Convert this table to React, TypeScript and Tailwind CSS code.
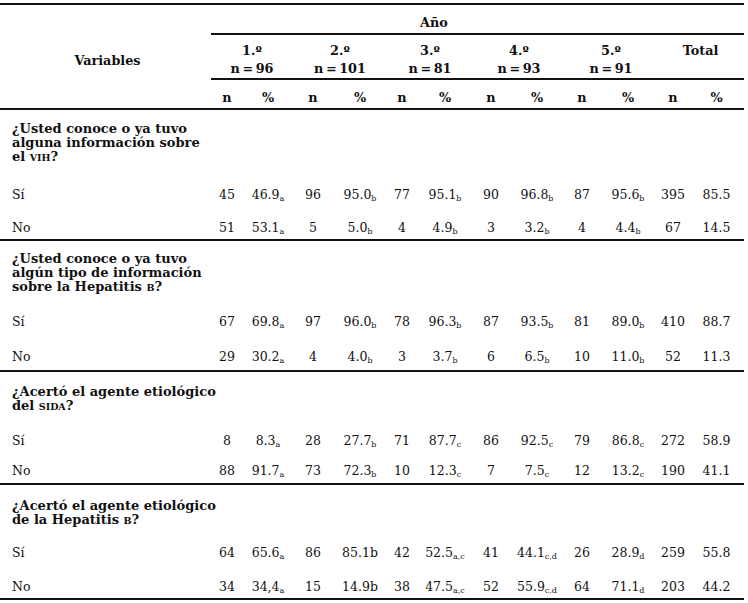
import React from "react";

type Cell = string | [string, string];

const GRID =
  "grid grid-cols-[211px_32px_50px_40px_54px_30px_56px_36px_56px_34px_58px_32px_55px]";

function Val({ v }: { v: Cell }) {
  if (typeof v === "string") return <>{v}</>;
  return (
    <>
      {v[0]}
      <sub className="text-[8px]">{v[1]}</sub>
    </>
  );
}

function DataRow({
  label,
  values,
  className,
}: {
  label: string;
  values: Cell[];
  className: string;
}) {
  return (
    <div className={`${GRID} leading-[16px] ${className}`}>
      <div className="pl-[12px] h-[16px]">{label}</div>
      {values.map((v, i) => (
        <div key={i} className="h-[16px] text-center whitespace-nowrap">
          <Val v={v} />
        </div>
      ))}
    </div>
  );
}

const SC = "uppercase text-[9.5px] leading-[0]";

type Section = {
  header: React.ReactNode;
  headerCls: string;
  si: Cell[];
  no: Cell[];
  siCls: string;
  noCls: string;
};

const L = "h-[14px]";

const sections: Section[] = [
  {
    header: (
      <>
        <div className={L}>¿Usted conoce o ya tuvo</div>
        <div className={L}>alguna información sobre</div>
        <div className={L}>
          el <span className={SC}>vih</span>?
        </div>
      </>
    ),
    headerCls: "pt-[12px]",
    siCls: "pt-[23px]",
    noCls: "pt-[17px] pb-[3px]",
    si: ["45", ["46.9", "a"], "96", ["95.0", "b"], "77", ["95.1", "b"], "90", ["96.8", "b"], "87", ["95.6", "b"], "395", "85.5"],
    no: ["51", ["53.1", "a"], "5", ["5.0", "b"], "4", ["4.9", "b"], "3", ["3.2", "b"], "4", ["4.4", "b"], "67", "14.5"],
  },
  {
    header: (
      <>
        <div className={L}>¿Usted conoce o ya tuvo</div>
        <div className={L}>algún tipo de información</div>
        <div className={L}>
          sobre la Hepatitis <span className={SC}>b</span>?
        </div>
      </>
    ),
    headerCls: "pt-[11px]",
    siCls: "pt-[20px]",
    noCls: "pt-[19px] pb-[5px]",
    si: ["67", ["69.8", "a"], "97", ["96.0", "b"], "78", ["96.3", "b"], "87", ["93.5", "b"], "81", ["89.0", "b"], "410", "88.7"],
    no: ["29", ["30.2", "a"], "4", ["4.0", "b"], "3", ["3.7", "b"], "6", ["6.5", "b"], "10", ["11.0", "b"], "52", "11.3"],
  },
  {
    header: (
      <>
        <div className={L}>¿Acertó el agente etiológico</div>
        <div className={L}>
          del <span className={SC}>sida</span>?
        </div>
      </>
    ),
    headerCls: "pt-[13px]",
    siCls: "pt-[20px]",
    noCls: "pt-[14px] pb-[4px]",
    si: ["8", ["8.3", "a"], "28", ["27.7", "b"], "71", ["87.7", "c"], "86", ["92.5", "c"], "79", ["86.8", "c"], "272", "58.9"],
    no: ["88", ["91.7", "a"], "73", ["72.3", "b"], "10", ["12.3", "c"], "7", ["7.5", "c"], "12", ["13.2", "c"], "190", "41.1"],
  },
  {
    header: (
      <>
        <div className={L}>¿Acertó el agente etiológico</div>
        <div className={L}>
          de la Hepatitis <span className={SC}>b</span>?
        </div>
      </>
    ),
    headerCls: "pt-[14px]",
    siCls: "pt-[18px]",
    noCls: "pt-[18px] pb-[3px]",
    si: ["64", ["65.6", "a"], "86", "85.1b", "42", ["52.5", "a,c"], "41", ["44.1", "c,d"], "26", ["28.9", "d"], "259", "55.8"],
    no: ["34", ["34,4", "a"], "15", "14.9b", "38", ["47.5", "a,c"], "52", ["55.9", "c,d"], "64", ["71.1", "d"], "203", "44.2"],
  },
];

const groups: [string, string | null][] = [
  ["1.º", "n\u2009=\u200996"],
  ["2.º", "n\u2009=\u2009101"],
  ["3.º", "n\u2009=\u200981"],
  ["4.º", "n\u2009=\u200993"],
  ["5.º", "n\u2009=\u200991"],
  ["Total", null],
];

export default function App() {
  return (
    <div className="w-[748px] h-[603px] bg-white overflow-hidden font-['DejaVu_Serif',serif] text-[12.5px] text-[#111111]">
      <div className="w-[744px] mt-[3px] border-t-2 border-[#111111]">
        {/* Header */}
        <div className="flex border-b-2 border-[#111111] font-bold text-[12.8px]">
          <div className="w-[211px] pt-[48px] leading-[16px] text-center pl-[4px]">Variables</div>
          <div className="w-[533px]">
            <div className="h-[30px] pt-[10px] pl-[209px] leading-[16px] border-b-2 border-[#111111]">Año</div>
            <div className="grid grid-cols-[82px_94px_86px_92px_92px_87px] h-[45px] pt-[7px] leading-[18px] border-b-2 border-[#111111]">
              {groups.map(([a, b], i) => (
                <div key={i} className="text-center whitespace-nowrap">
                  {a}
                  {b && (
                    <>
                      <br />
                      {b}
                    </>
                  )}
                </div>
              ))}
            </div>
            <div className="grid grid-cols-[32px_50px_40px_54px_30px_56px_36px_56px_34px_58px_32px_55px] h-[28px] pt-[10px] leading-[16px]">
              {Array.from({ length: 6 }).map((_, i) => (
                <React.Fragment key={i}>
                  <div className="text-center">n</div>
                  <div className="text-center">%</div>
                </React.Fragment>
              ))}
            </div>
          </div>
        </div>
        {sections.map((s, i) => (
          <div key={i} className="border-b-2 border-[#111111]">
            <div className={`pl-[12px] font-bold text-[13px] leading-[14px] whitespace-nowrap ${s.headerCls}`}>
              {s.header}
            </div>
            <DataRow label="Sí" values={s.si} className={s.siCls} />
            <DataRow label="No" values={s.no} className={s.noCls} />
          </div>
        ))}
      </div>
    </div>
  );
}
